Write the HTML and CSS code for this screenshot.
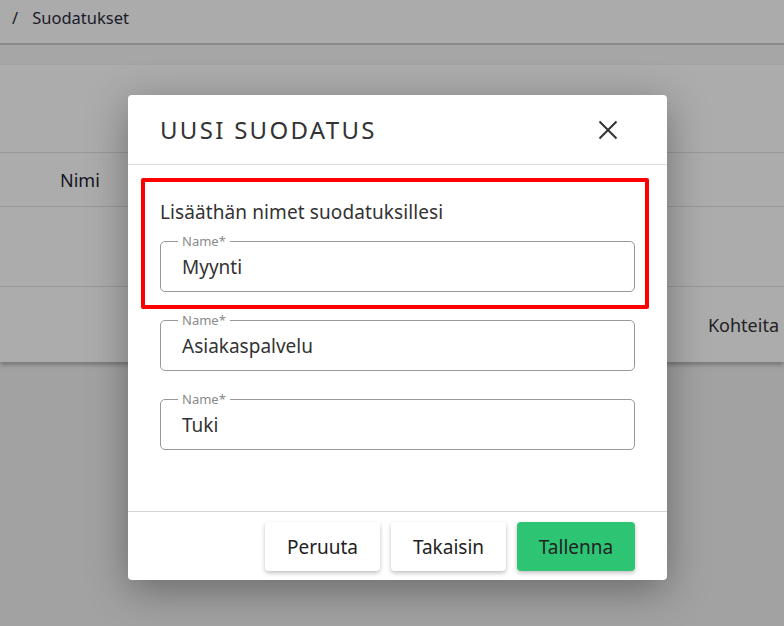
FILE: index.html
```html
<!DOCTYPE html>
<html lang="fi">
<head>
    <meta charset="UTF-8">
    <meta name="viewport" content="width=device-width, initial-scale=1.0">
    <title>Suodatukset</title>
    <link rel="stylesheet" href="styles.css">
</head>
<body>
    <div class="page">
        <header class="topbar">
            <span class="crumb-sep">/</span>
            <span class="crumb">Suodatukset</span>
        </header>
        <div class="strip"></div>
        <div class="card">
            <div class="row row-top"></div>
            <div class="row row-head"><span class="col-name">Nimi</span></div>
            <div class="row row-mid"></div>
            <div class="row row-last"><span class="col-count">Kohteita</span></div>
        </div>
    </div>

    <div class="overlay">
        <div class="modal">
            <div class="modal-header">
                <h2>UUSI SUODATUS</h2>
                <button class="close" type="button" aria-label="Sulje">
                    <svg width="20" height="20" viewBox="0 0 20 20">
                        <path d="M1.5 1.5 L18.5 18.5 M18.5 1.5 L1.5 18.5" stroke="#333" stroke-width="2" fill="none"/>
                    </svg>
                </button>
            </div>
            <div class="modal-body">
                <div class="highlight"></div>
                <p class="hint">Lisääthän nimet suodatuksillesi</p>
                <fieldset class="field">
                    <legend>Name*</legend>
                    <input type="text" value="Myynti">
                </fieldset>
                <fieldset class="field">
                    <legend>Name*</legend>
                    <input type="text" value="Asiakaspalvelu">
                </fieldset>
                <fieldset class="field">
                    <legend>Name*</legend>
                    <input type="text" value="Tuki">
                </fieldset>
            </div>
            <div class="modal-footer">
                <button class="btn" type="button">Peruuta</button>
                <button class="btn" type="button">Takaisin</button>
                <button class="btn btn-save" type="button">Tallenna</button>
            </div>
        </div>
    </div>
</body>
</html>
```

FILE: styles.css
```css
body {
    margin: 0;
    font-family: "Noto Sans", Arial, sans-serif;
    background-color: #a2a2a2;
    color: #222;
    height: 626px;
    overflow: hidden;
}

.page {
    width: 784px;
}

.topbar {
    background-color: #ababab;
    border-bottom: 2px solid #8a8a8a;
    display: flex;
    align-items: center;
    padding-left: 12px;
    gap: 14px;
    font-size: 16.5px;
    color: #1a1a2a;
    height: 34px;
    padding-bottom: 9px;
}

.strip {
    height: 20px;
    background-color: #a6a6a6;
}

.card {
    background-color: #acacac;
    height: 297px;
    box-shadow: 0 3px 4px rgba(0, 0, 0, 0.25);
}

.row {
    border-bottom: 1px solid #989898;
    box-sizing: border-box;
    display: flex;
    align-items: center;
}

.row-top {
    height: 88px;
}

.row-head {
    height: 54px;
    padding-left: 60px;
    font-size: 18px;
    color: #151525;
}

.row-mid {
    height: 80px;
}

.row-last {
    height: 75px;
    border-bottom: none;
    justify-content: flex-end;
    font-size: 18px;
    color: #222;
    padding-right: 5px;
}

.overlay {
    position: absolute;
    top: 0;
    left: 0;
    width: 784px;
    height: 626px;
}

.modal {
    position: absolute;
    top: 95px;
    left: 128px;
    width: 539px;
    height: 485px;
    background-color: #fff;
    border-radius: 4px;
    box-shadow: 0 10px 40px rgba(0, 0, 0, 0.35);
    display: flex;
    flex-direction: column;
}

.modal-header {
    height: 70px;
    border-bottom: 1px solid #dcdcdc;
    display: flex;
    align-items: center;
    justify-content: space-between;
    padding: 0 49px 0 32px;
    box-sizing: border-box;
}

.modal-header h2 {
    margin: 0;
    font-size: 24px;
    font-weight: 400;
    letter-spacing: 2.3px;
    color: #333;
}

.close {
    border: none;
    background: none;
    padding: 0;
    width: 20px;
    height: 20px;
    cursor: pointer;
}

.modal-body {
    position: relative;
    flex: 1;
    padding: 0 32px;
}

.highlight {
    position: absolute;
    top: 13px;
    left: 13px;
    width: 500px;
    height: 123px;
    border: 4px solid #ff0000;
    border-radius: 2px;
}

.hint {
    margin: 37px 0 12px;
    font-size: 19px;
    letter-spacing: 0.1px;
    color: #333;
    line-height: 20px;
}

.field {
    margin: 0 0 21px;
    border: 1px solid #999;
    border-radius: 5px;
    padding: 0 21px;
    height: 58px;
    box-sizing: border-box;
}

.field legend {
    padding: 0 4px;
    margin-left: -4px;
    font-size: 13px;
    color: #8a8a8a;
    line-height: 14px;
}

.field input {
    border: none;
    outline: none;
    padding: 0;
    margin-top: 6px;
    width: 100%;
    font-family: inherit;
    font-size: 19px;
    color: #333;
    background: none;
}

.modal-footer {
    height: 69px;
    border-top: 1px solid #d4d4d4;
    display: flex;
    justify-content: flex-end;
    align-items: flex-start;
    gap: 11px;
    padding: 10px 32px 0;
    box-sizing: border-box;
}

.btn {
    width: 115px;
    height: 49px;
    border: none;
    border-radius: 4px;
    background-color: #fff;
    box-shadow: 0 2px 4px rgba(0, 0, 0, 0.25);
    font-family: inherit;
    font-size: 19px;
    color: #222;
    cursor: pointer;
}

.btn-save {
    width: 118px;
    background-color: #2dc574;
}
```
